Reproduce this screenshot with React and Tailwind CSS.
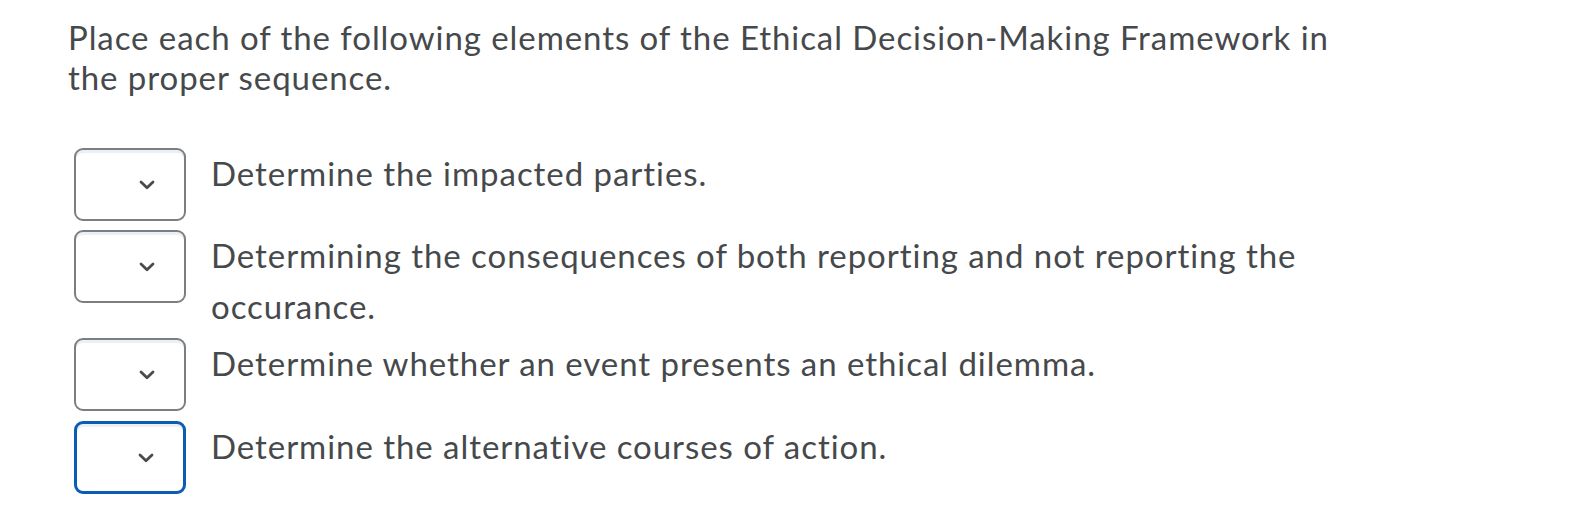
import React from "react";

const items = [
  { text: "Determine the impacted parties.", focus: false, mt: "" },
  { text: "Determining the consequences of both reporting and not reporting the occurance.", focus: false, mt: "mt-[9px]" },
  { text: "Determine whether an event presents an ethical dilemma.", focus: false, mt: "mt-[6px]" },
  { text: "Determine the alternative courses of action.", focus: true, mt: "mt-[10px]" },
];

function Chevron() {
  return (
    <svg width="18" height="11" viewBox="0 0 18 11" className="absolute right-[28px] top-1/2 -translate-y-1/2">
      <path d="M3 2.5 L9 8.3 L15 2.5" fill="none" stroke="#494c4e" strokeWidth="2.8" strokeLinecap="round" strokeLinejoin="round" />
    </svg>
  );
}

export default function App() {
  return (
    <div
      className="min-h-[528px] bg-white pl-[68px] pt-[17px] text-[#46494b]"
      style={{ fontFamily: "Lato, 'Open Sans', sans-serif" }}
    >
      <p className="w-[1275px] text-[33px] leading-[40px] tracking-[0.93px]">
        Place each of the following elements of the Ethical Decision-Making Framework in the proper sequence.
      </p>
      <div className="mt-[51px] flex flex-col pl-[6px]">
        {items.map((it, i) => (
          <div key={i} className={`flex items-start gap-[25px] ${it.mt}`}>
            <div
              className={
                it.focus
                  ? "relative h-[73px] w-[112px] shrink-0 rounded-[9px] border-[3px] border-[#0b5cb5] bg-white shadow-[inset_0_3px_0_0_rgba(185,194,208,0.25)]"
                  : "relative h-[73px] w-[112px] shrink-0 rounded-[9px] border-2 border-[#7b7f82] bg-white shadow-[inset_0_3px_0_0_rgba(185,194,208,0.25)]"
              }
            >
              <Chevron />
            </div>
            <div className="w-[1150px] text-[33px] leading-[51px] tracking-[0.95px]">{it.text}</div>
          </div>
        ))}
      </div>
    </div>
  );
}
